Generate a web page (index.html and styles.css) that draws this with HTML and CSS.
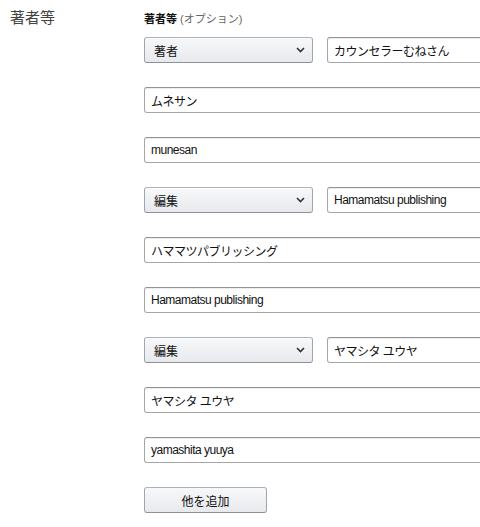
FILE: index.html
```html
<!DOCTYPE html>
<html lang="ja">
<head>
<meta charset="utf-8">
<link rel="stylesheet" href="styles.css">
</head>
<body>
<div class="section">
  <div class="side-title">著者等</div>
  <div class="form">
    <div class="label"><b>著者等</b> <span class="opt">(オプション)</span></div>
    <div class="rows">
      <div class="pair">
        <div class="select"><span>著者</span><svg class="chev" width="9" height="6" viewBox="0 0 9 6"><path d="M1 1 L4.5 4.5 L8 1" fill="none" stroke="#333" stroke-width="1.6"/></svg></div>
        <div class="input short">カウンセラーむねさん</div>
      </div>
      <div class="input">ムネサン</div>
      <div class="input">munesan</div>
      <div class="pair">
        <div class="select"><span>編集</span><svg class="chev" width="9" height="6" viewBox="0 0 9 6"><path d="M1 1 L4.5 4.5 L8 1" fill="none" stroke="#333" stroke-width="1.6"/></svg></div>
        <div class="input short">Hamamatsu publishing</div>
      </div>
      <div class="input">ハママツパブリッシング</div>
      <div class="input">Hamamatsu publishing</div>
      <div class="pair">
        <div class="select"><span>編集</span><svg class="chev" width="9" height="6" viewBox="0 0 9 6"><path d="M1 1 L4.5 4.5 L8 1" fill="none" stroke="#333" stroke-width="1.6"/></svg></div>
        <div class="input short">ヤマシタ ユウヤ</div>
      </div>
      <div class="input">ヤマシタ ユウヤ</div>
      <div class="input">yamashita yuuya</div>
      <div class="btn">他を追加</div>
    </div>
  </div>
</div>
</body>
</html>
```
FILE: styles.css
```css
html, body {
  margin: 0;
  padding: 0;
  background: #fff;
  overflow: hidden;
}
body {
  width: 480px;
  height: 527px;
  font-family: "Liberation Sans", Arial, "Noto Sans CJK JP", sans-serif;
  color: #111;
}
.section {
  display: grid;
  grid-template-columns: 144px 336px;
}
.side-title {
  padding: 8px 0 0 10px;
  font-size: 15px;
  line-height: 20px;
  color: #444;
}
.form {
  overflow: hidden;
}
.label {
  padding-top: 13px;
  height: 37px;
  box-sizing: border-box;
  font-size: 11px;
  line-height: 13px;
  color: #111;
}
.label .opt {
  color: #666;
  font-size: 11px;
}
.rows {
  display: flex;
  flex-direction: column;
  gap: 24px;
}
.pair {
  display: flex;
  gap: 14px;
}
.select {
  width: 169px;
  flex: none;
  height: 26px;
  box-sizing: border-box;
  display: flex;
  align-items: center;
  justify-content: space-between;
  padding: 0 7px 0 9px;
  border: 1px solid #adb1b8;
  border-color: #adb1b8 #a2a6ac #8d9096;
  border-radius: 3px;
  background: linear-gradient(to bottom, #f7f8fa, #e7e9ec);
  box-shadow: 0 1px 0 rgba(255,255,255,.6) inset;
  font-size: 12px;
  color: #111;
}
.chev {
  display: block;
}
.input {
  width: 400px;
  flex: none;
  height: 26px;
  box-sizing: border-box;
  padding: 0 6px;
  display: flex;
  align-items: center;
  border: 1px solid #a6a6a6;
  border-top-color: #949494;
  border-radius: 3px;
  box-shadow: 0 1px 0 rgba(0,0,0,.07) inset;
  font-size: 12px;
  letter-spacing: -0.5px;
  color: #111;
  white-space: nowrap;
}
.input.short {
  width: 200px;
}
.btn {
  width: 123px;
  height: 26px;
  box-sizing: border-box;
  display: flex;
  align-items: center;
  justify-content: center;
  border: 1px solid #adb1b8;
  border-color: #adb1b8 #a2a6ac #8d9096;
  border-radius: 3px;
  background: linear-gradient(to bottom, #f7f8fa, #e7e9ec);
  font-size: 12px;
  color: #111;
}
```
